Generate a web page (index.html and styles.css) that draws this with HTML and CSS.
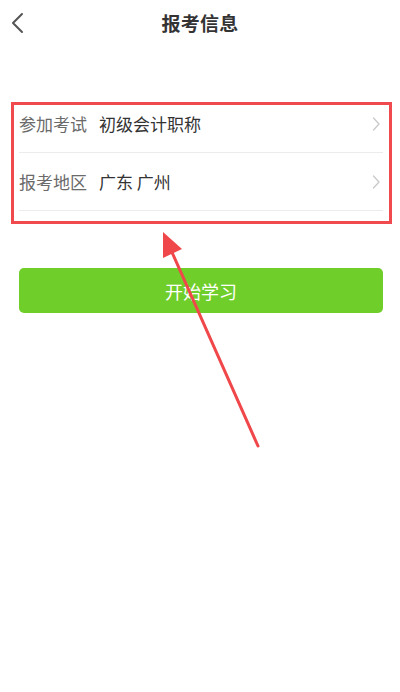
FILE: index.html
```html
<!DOCTYPE html>
<html lang="zh-CN">
<head>
<meta charset="utf-8">
<title>报考信息</title>
<link rel="stylesheet" href="styles.css">
</head>
<body>
<div class="page">
  <header class="nav">
    <svg class="back" width="14" height="22" viewBox="0 0 14 22"><path d="M11 2 L2 11 L11 20" fill="none" stroke="#555" stroke-width="2" stroke-linecap="round" stroke-linejoin="round"/></svg>
    <h1 class="title">报考信息</h1>
  </header>
  <section class="list">
    <div class="row">
      <span class="label">参加考试</span>
      <span class="value">初级会计职称</span>
      <svg class="chev" width="8" height="14" viewBox="0 0 8 14"><path d="M1.5 1 L7 7 L1.5 13" fill="none" stroke="#c9c9c9" stroke-width="1.3" stroke-linecap="round" stroke-linejoin="round"/></svg>
    </div>
    <div class="row">
      <span class="label">报考地区</span>
      <span class="value">广东 广州</span>
      <svg class="chev" width="8" height="14" viewBox="0 0 8 14"><path d="M1.5 1 L7 7 L1.5 13" fill="none" stroke="#c9c9c9" stroke-width="1.3" stroke-linecap="round" stroke-linejoin="round"/></svg>
    </div>
  </section>
  <button class="start">开始学习</button>
  <div class="highlight"></div>
  <svg class="arrow" width="400" height="692" viewBox="0 0 400 692">
    <line x1="258" y1="446" x2="171" y2="250" stroke="#f0474a" stroke-width="3" stroke-linecap="round"/>
    <polygon points="163,232 182,249 163,258" fill="#f0474a"/>
  </svg>
</div>
</body>
</html>
```
FILE: styles.css
```css
* { box-sizing: border-box; }
html, body { margin: 0; padding: 0; background: #fff; }
body {
  font-family: "Noto Sans CJK SC", "Noto Sans", sans-serif;
  width: 400px;
  height: 692px;
  overflow: hidden;
}
.page {
  position: relative;
  width: 400px;
  height: 692px;
}
.nav {
  height: 44px;
  display: flex;
  align-items: center;
  justify-content: center;
  position: relative;
}
.back {
  position: absolute;
  left: 11px;
  top: 12px;
}
.title {
  margin: 0;
  font-size: 19px;
  font-weight: 700;
  color: #333;
  line-height: 1;
  letter-spacing: 0.3px;
}
.list {
  margin: 51px 17px 0 19px;
}
.row {
  height: 58px;
  display: flex;
  align-items: center;
  border-bottom: 1px solid #ececec;
  padding-right: 3px;
}
.label {
  font-size: 17px;
  color: #6a6a6a;
  margin-right: 12px;
}
.value {
  font-size: 17px;
  color: #333;
  flex: 1;
}
.chev { display: block; }
.start {
  display: block;
  margin: 57px 17px 0 19px;
  width: 364px;
  height: 45px;
  border: none;
  border-radius: 5px;
  background: #6fce2a;
  color: #fff;
  font-family: inherit;
  font-size: 18px;
  padding: 0;
}
.highlight {
  position: absolute;
  left: 11px;
  top: 102px;
  width: 381px;
  height: 122px;
  border: 3px solid #f04a4e;
}
.arrow {
  position: absolute;
  left: 0;
  top: 0;
  pointer-events: none;
}
```
